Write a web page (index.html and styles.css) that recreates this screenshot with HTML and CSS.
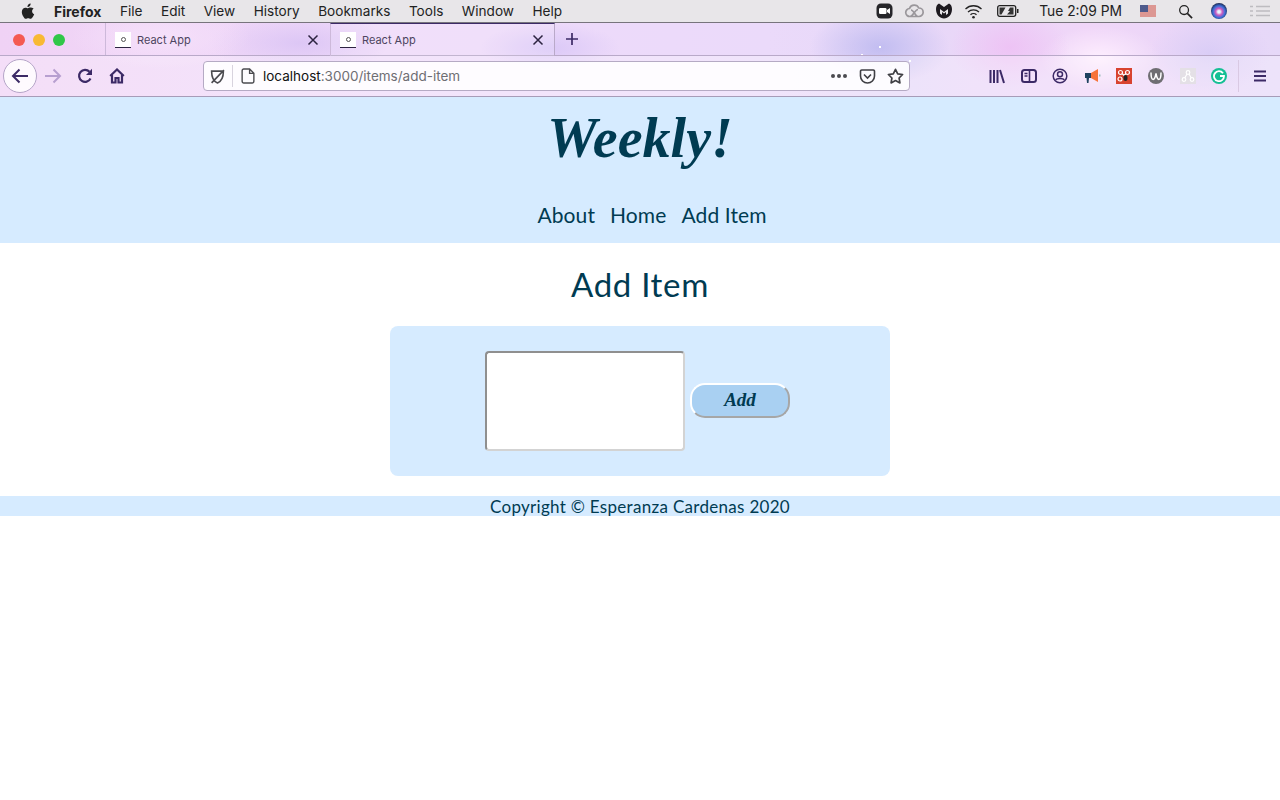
FILE: index.html
```html
<!doctype html>
<html lang="en">
  <head>
    <title>React App</title>
    <meta charset="UTF-8">
    <link rel="stylesheet" href="styles.css">
  </head>
  <body>
    <div class="menuBar">
      <div class="menuLeft">
        <svg class="apple" width="14" height="16" viewBox="0 0 14 16"><path fill="#222" d="M9.6 0.4c.1 1-.3 1.9-.8 2.5-.6.7-1.4 1.200-2.300 1.100-.1-.9.300-1.900.8-2.500C7.900.9 8.900.4 9.600.4zM12.700 5.500c-1 .7-1.600 1.600-1.600 2.800 0 1.400.8 2.400 2.100 3-.4 1.100-.9 2.100-1.600 3-.6.8-1.200 1.500-2.100 1.500-.9 0-1.200-.5-2.300-.5-1.100 0-1.400.5-2.300.5-.9 0-1.500-.7-2.100-1.600C1.600 12.800.8 10.900.8 9.100c0-2.900 1.900-4.400 3.700-4.400 1 0 1.800.6 2.400.6.600 0 1.500-.7 2.600-.7.900 0 2.200.3 3.200.9z"/></svg>
        <span class="menuItem appName">Firefox</span>
        <span class="menuItem">File</span>
        <span class="menuItem">Edit</span>
        <span class="menuItem">View</span>
        <span class="menuItem">History</span>
        <span class="menuItem">Bookmarks</span>
        <span class="menuItem">Tools</span>
        <span class="menuItem">Window</span>
        <span class="menuItem">Help</span>
      </div>
      <div class="menuRight">
        <svg width="17" height="16" viewBox="0 0 17 16"><rect x="0.500" y="0.500" width="16" height="15" rx="4.500" fill="#26262a"/><rect x="3" y="5" width="7.500" height="6" rx="1.200" fill="#fff"/><path d="M11 7l3-2v6l-3-2z" fill="#fff"/></svg>
        <svg width="20" height="14" viewBox="0 0 20 14"><path d="M6 12.500a4 4 0 0 1-.5-8 5 5 0 0 1 9.300-.5A4.200 4.200 0 0 1 15 12.500zM6 12.500c3 0 5-7 8-7M7 6c3 0 4 6.500 7 6.500" fill="none" stroke="#9a979b" stroke-width="1.700"/></svg>
        <svg width="18" height="16" viewBox="0 0 18 16"><path d="M1 6C1 3 2.500 1 4 0.500L9 4l5-3.500C15.500 1 17 3 17 6c0 6-4 9.500-8 9.500S1 12 1 6zM5 6v4.500l2 1.500V9l2 1.500L11 9v3l2-1.500V6l-4 3z" fill="#1d1a1f" fill-rule="evenodd"/></svg>
        <svg width="19" height="15" viewBox="0 0 19 15"><path d="M1.500 5a11.500 11.500 0 0 1 16 0M4 8a8 8 0 0 1 11 0M6.500 10.800a4.300 4.300 0 0 1 6 0" fill="none" stroke="#222" stroke-width="1.300"/><circle cx="9.500" cy="13.300" r="1.300" fill="#222"/></svg>
        <svg class="battery" width="22" height="12" viewBox="0 0 22 12"><rect x="0.700" y="0.700" width="18" height="10.600" rx="2" fill="none" stroke="#222" stroke-width="1.300"/><path d="M2.500 2.500h6l-4 7h-2zM10 9.500l3-3.500h-2l2-3.500h3.500v7z" fill="#333"/><rect x="20" y="4" width="1.500" height="4" fill="#222"/></svg>
        <span class="clock">Tue 2:09 PM</span>
        <span class="flag"><span class="flagCanton"></span></span>
        <svg class="search" width="15" height="15" viewBox="0 0 16 16"><circle cx="6.500" cy="6.500" r="4.700" fill="none" stroke="#222" stroke-width="1.400"/><path d="M10 10l5 5" stroke="#222" stroke-width="1.800"/></svg>
        <span class="siri"></span>
        <svg class="listIcon" width="20" height="12" viewBox="0 0 20 12"><path d="M6 1.500h14M6 6h14M6 10.500h14M0 1.500h3M0 6h3M0 10.500h3" stroke="#bdbcc0" stroke-width="1.500"/></svg>
      </div>
    </div>

    <div class="chrome">
      <div class="tabRow">
        <div class="windowButtons">
          <span class="dot dotRed"></span>
          <span class="dot dotYellow"></span>
          <span class="dot dotGreen"></span>
        </div>
        <div class="tab">
          <span class="favicon"><span class="faviconDot"></span></span>
          <span class="tabTitle">React App</span>
          <svg class="tabClose" width="12" height="12" viewBox="0 0 12 12"><path d="M1.500 1.500l9 9M10.500 1.500l-9 9" stroke="#2c2340" stroke-width="1.500"/></svg>
        </div>
        <div class="tab tabActive">
          <span class="favicon"><span class="faviconDot"></span></span>
          <span class="tabTitle">React App</span>
          <svg class="tabClose" width="12" height="12" viewBox="0 0 12 12"><path d="M1.500 1.500l9 9M10.500 1.500l-9 9" stroke="#2c2340" stroke-width="1.500"/></svg>
        </div>
        <svg class="newTab" width="14" height="14" viewBox="0 0 14 14"><path d="M7 1v12M1 7h12" stroke="#3c2a66" stroke-width="1.700"/></svg>
      </div>

      <div class="navRow">
        <span class="backButton">
          <svg width="18" height="16" viewBox="0 0 18 16"><path d="M17 8H2M8.500 1.500L2 8l6.500 6.500" fill="none" stroke="#3c2a66" stroke-width="2"/></svg>
        </span>
        <svg class="navIcon forward" width="18" height="16" viewBox="0 0 18 16"><path d="M1 8h15M9.500 1.500L16 8l-6.500 6.500" fill="none" stroke="#b79fd0" stroke-width="2"/></svg>
        <svg class="navIcon reload" width="16" height="16" viewBox="0 0 16 16"><path d="M13.500 10.500A6 6 0 1 1 12.500 3.800" fill="none" stroke="#3c2a66" stroke-width="2.200"/><path d="M15 0.800V7H9z" fill="#3c2a66"/></svg>
        <svg class="navIcon home" width="16" height="16" viewBox="0 0 16 16"><path d="M1.200 8L8 1.500 14.800 8M3 7v7.500h3.500V10h3v4.500H13V7" fill="none" stroke="#3c2a66" stroke-width="2.200"/></svg>

        <div class="urlBar">
          <svg class="shield" width="15" height="15" viewBox="0 0 14 14"><path d="M1.500 2h11c0 6-2 9.500-5.500 11C3.500 11.500 1.500 8 1.500 2zM1.500 13L13 1" fill="none" stroke="#4b4b50" stroke-width="1.500"/></svg>
          <span class="urlDivider"></span>
          <svg width="14" height="16" viewBox="0 0 13 15"><path d="M1 2.500a1.500 1.500 0 0 1 1.500-1.500H8l4 4v7.500a1.500 1.500 0 0 1-1.500 1.500h-8A1.500 1.500 0 0 1 1 12.500zM8 1v4h4" fill="none" stroke="#4b4b50" stroke-width="1.300"/></svg>
          <span class="url"><span class="urlHost">localhost</span>:3000/items/add-item</span>
          <span class="urlDots"><i></i><i></i><i></i></span>
          <svg class="urlIcon" width="17" height="15" viewBox="0 0 16 15"><path d="M1 2.200A1.200 1.200 0 0 1 2.200 1h11.600A1.200 1.200 0 0 1 15 2.200V7a7 7 0 0 1-14 0zM4.500 5.500L8 9l3.500-3.500" fill="none" stroke="#3f3f44" stroke-width="1.600"/></svg>
          <svg class="urlIcon" width="17" height="16" viewBox="0 0 17 16"><path d="M8.500 1.300l2.200 4.500 4.900.7-3.500 3.500.8 4.900-4.400-2.300-4.400 2.300.8-4.900L1.400 6.500l4.900-.7z" fill="none" stroke="#3f3f44" stroke-width="1.700" stroke-linejoin="round"/></svg>
        </div>

        <div class="toolIcons">
          <svg width="16" height="15" viewBox="0 0 16 15"><path d="M1.500 1v13M5 1v13M8.500 1v13M11 1l4 13" fill="none" stroke="#3c2a66" stroke-width="2"/></svg>
          <svg width="16" height="14" viewBox="0 0 16 14"><rect x="1" y="1" width="14" height="12" rx="2.500" fill="none" stroke="#3c2a66" stroke-width="2"/><path d="M8.500 1v12M3.500 4.500h3M3.500 7h3" stroke="#3c2a66" stroke-width="1.600"/></svg>
          <svg width="16" height="16" viewBox="0 0 16 16"><circle cx="8" cy="8" r="6.800" fill="none" stroke="#3c2a66" stroke-width="1.500"/><circle cx="8" cy="6.300" r="2.500" fill="none" stroke="#3c2a66" stroke-width="1.500"/><path d="M3.800 12c1-2 7.400-2 8.400 0" fill="none" stroke="#3c2a66" stroke-width="1.500"/></svg>
          <svg width="17" height="16" viewBox="0 0 17 16"><path d="M1 5h6v5H5l-.5 5H3l-.5-5H1z" fill="#1f4260"/><path d="M7 5l7-4v13L7 10z" fill="#f7743b"/><rect x="15" y="6.500" width="1.500" height="2" fill="#9bb"/></svg>
          <span class="appTile tileRed"><svg width="14" height="14" viewBox="0 0 14 14"><g fill="none" stroke="#fff" stroke-width="1.200"><circle cx="3.500" cy="3.500" r="2"/><circle cx="10.500" cy="3.500" r="2"/><circle cx="3" cy="10" r="2"/><path d="M5 4.500l2 2 2-2"/></g><ellipse cx="8.500" cy="9" rx="2" ry="3" fill="#222"/></svg></span>
          <span class="appRound roundGrey"><svg width="12" height="10" viewBox="0 0 12 10"><path d="M1 1.500c0 9 3.500 9 5 1 1.500 8 5 8 5-1" fill="none" stroke="#fff" stroke-width="1.500"/></svg></span>
          <span class="appTile tilePale"><svg width="14" height="14" viewBox="0 0 14 14"><g fill="none" stroke="#fff" stroke-width="1.200"><circle cx="7" cy="3.500" r="1.800"/><circle cx="3" cy="10.500" r="1.800"/><circle cx="11" cy="10.500" r="1.800"/><path d="M6 5l-2.300 4M8 5l2.300 4"/></g></svg></span>
          <span class="appRound roundGreen"><svg width="12" height="12" viewBox="0 0 12 12"><path d="M10 3.200A5 5 0 1 0 11 6H7" fill="none" stroke="#fff" stroke-width="1.800"/></svg></span>
        </div>
        <span class="toolDivider"></span>
        <svg class="burger" width="12" height="12" viewBox="0 0 12 12"><path d="M0 1.500h12M0 6h12M0 10.500h12" stroke="#3c2a66" stroke-width="2"/></svg>
      </div>
    </div>

    <header class="siteHeader">
      <h1 class="logo">Weekly!</h1>
      <nav class="siteNav">
        <a href="#">About</a>
        <a href="#">Home</a>
        <a href="#">Add Item</a>
      </nav>
    </header>

    <main class="content">
      <h2 class="pageTitle">Add Item</h2>
      <form class="addForm">
        <textarea class="itemInput"></textarea>
        <button class="addButton" type="button">Add</button>
      </form>
    </main>

    <footer class="siteFooter">Copyright © Esperanza Cardenas 2020</footer>
  </body>
</html>
```

FILE: styles.css
```css
html, body {
  margin: 0;
  padding: 0;
  background: #fff;
}

body {
  font-family: "Lato", "Open Sans", sans-serif;
  color: #003b52;
  overflow: hidden;
}

/* mac menu bar */
.menuBar {
  height: 22px;
  display: flex;
  justify-content: space-between;
  align-items: center;
  background: #e8e6e9;
  border-bottom: 1px solid #77747c;
  font-family: "Inter", "Liberation Sans", sans-serif;
  font-size: 13.6px;
  color: #222;
}

.menuLeft {
  display: flex;
  align-items: center;
  padding-left: 21px;
}

.apple {
  margin-right: 19px;
}

.menuItem {
  margin-right: 18.500px;
}

.appName {
  font-weight: 700;
  font-size: 14px;
}

.menuRight {
  display: flex;
  align-items: center;
  gap: 11px;
  padding-right: 10px;
}

.battery {
  margin-left: 3px;
}

.clock {
  margin: 0 7px 0 9px;
  font-size: 13.800px;
}

.flag {
  display: block;
  width: 16px;
  height: 12px;
  margin-right: 11px;
  background: #dc9793;
  position: relative;
}

.flagCanton {
  position: absolute;
  left: 0;
  top: 0;
  width: 8px;
  height: 7px;
  background: #4e5a8c;
}

.search {
  margin-right: 7px;
}

.siri {
  display: block;
  width: 16px;
  height: 16px;
  border-radius: 50%;
  background: radial-gradient(circle at 50% 55%, #e8f4ff 0 10%, #d05cc0 28%, #3b6fd8 50%, #15152e 80%);
}

.listIcon {
  margin-left: 12px;
}

/* browser chrome */
.chrome {
  height: 73px;
  border-bottom: 1px solid #a79cb8;
  background:
    radial-gradient(circle 1px at 862px 32px, #fff 0 100%, transparent 100%),
    radial-gradient(circle 1px at 880px 24px, #fff 0 100%, transparent 100%),
    radial-gradient(circle 1px at 893px 44px, #fff 0 100%, transparent 100%),
    radial-gradient(circle 1px at 910px 38px, #fff 0 100%, transparent 100%),
    radial-gradient(ellipse 70px 38px at 880px 24px, rgba(190, 186, 240, 0.9) 0%, rgba(190, 186, 240, 0) 100%),
    radial-gradient(ellipse 60px 40px at 1010px 24px, rgba(238, 190, 244, 0.8) 0%, rgba(238, 190, 244, 0) 100%),
    radial-gradient(ellipse 60px 32px at 1100px 35px, rgba(255, 240, 255, 0.9) 0%, rgba(255, 240, 255, 0) 100%),
    radial-gradient(ellipse 60px 40px at 1210px 30px, rgba(216, 204, 246, 0.9) 0%, rgba(216, 204, 246, 0) 100%),
    radial-gradient(ellipse 90px 32px at 160px 14px, rgba(246, 226, 250, 0.9) 0%, rgba(246, 226, 250, 0) 100%),
    radial-gradient(ellipse 90px 30px at 300px 20px, rgba(216, 194, 244, 0.8) 0%, rgba(216, 194, 244, 0) 100%),
    radial-gradient(ellipse 70px 25px at 550px 25px, rgba(214, 196, 246, 0.8) 0%, rgba(214, 196, 246, 0) 100%),
    linear-gradient(90deg, #f0d2f5 0%, #efdafa 30%, #ebdafa 60%, #e6d8f8 70%, #f0d6f8 85%, #e6d8f8 100%);
}

.tabRow {
  height: 33px;
  display: flex;
  align-items: stretch;
  border-bottom: 1px solid #b9a9c9;
  box-sizing: border-box;
}

.windowButtons {
  width: 105px;
  box-sizing: border-box;
  padding: 2px 0 0 13px;
  display: flex;
  align-items: center;
  gap: 8px;
}

.dot {
  width: 12px;
  height: 12px;
  border-radius: 50%;
}

.dotRed { background: #f45a52; }
.dotYellow { background: #f8b934; }
.dotGreen { background: #30c748; }

.tab {
  width: 225px;
  box-sizing: border-box;
  display: flex;
  align-items: center;
  padding: 2px 11px 0 9px;
  border-left: 1px solid #cdb9da;
  font-family: "Inter", "Liberation Sans", sans-serif;
  font-size: 11px;
  color: #4d4560;
}

.tabActive {
  padding-top: 0;
  padding-right: 10px;
  border-top: 1px solid #3c2a66;
  border-right: 1px solid #b9a9c9;
  background: rgba(255, 255, 255, 0.14);
  margin-bottom: -1px;
}

.favicon {
  width: 16px;
  height: 15px;
  margin-right: 6px;
  background: #fff;
  border-bottom: 1px solid #2c2340;
  display: flex;
  align-items: center;
  justify-content: center;
}

.faviconDot {
  width: 5px;
  height: 5px;
  border-radius: 50%;
  border: 1px solid #555;
  box-sizing: border-box;
}

.tabTitle {
  flex: 1;
}

.newTab {
  align-self: center;
  margin-left: 10px;
}

.navRow {
  height: 40px;
  display: flex;
  align-items: center;
  padding-left: 3px;
  background: rgba(255, 255, 255, 0.28);
}

.backButton {
  width: 32px;
  height: 32px;
  border: 1px solid #b5a5c8;
  border-radius: 50%;
  background: rgba(255, 255, 255, 0.85);
  display: flex;
  align-items: center;
  justify-content: center;
}

.forward { margin-left: 7px; }
.reload { margin-left: 15px; }
.home { margin-left: 16px; }

.urlBar {
  width: 707px;
  height: 30px;
  margin-left: 78px;
  box-sizing: border-box;
  display: flex;
  align-items: center;
  background: rgba(255, 255, 255, 0.88);
  border: 1px solid #b5aac4;
  border-radius: 4px;
  padding: 0 5px 0 6px;
  font-family: "Inter", "Liberation Sans", sans-serif;
  font-size: 13.500px;
  color: #6e6e73;
}

.urlDivider {
  width: 1px;
  height: 22px;
  margin: 0 8px 0 7px;
  background: #d8d3de;
}

.url {
  flex: 1;
  margin-left: 8px;
}

.urlHost {
  color: #111;
}

.urlDots {
  display: flex;
  gap: 2px;
  margin-right: 12px;
}

.urlDots i {
  width: 4px;
  height: 4px;
  border-radius: 50%;
  background: #4b4b50;
}

.urlIcon {
  margin-right: 6px;
}

.urlIcon:last-child {
  margin-left: 5px;
  margin-right: 0;
}

.toolIcons {
  display: flex;
  align-items: center;
  gap: 15.600px;
  margin-left: 79px;
}

.appTile {
  width: 16px;
  height: 16px;
  display: flex;
  align-items: center;
  justify-content: center;
}

.tileRed { background: #d8432f; }
.tilePale { background: #e4e0e6; }

.appRound {
  width: 16px;
  height: 16px;
  border-radius: 50%;
  display: flex;
  align-items: center;
  justify-content: center;
}

.roundGrey { background: #6f6e72; }
.roundGreen { background: #14bf94; }

.toolDivider {
  width: 1px;
  height: 32px;
  margin-left: 11px;
  background: #d9c9e3;
}

.burger {
  margin-left: 15px;
}

/* the page */
.siteHeader {
  height: 146px;
  box-sizing: border-box;
  background: #d6ebff;
  text-align: center;
  padding-top: 10px;
}

.logo {
  margin: 0;
  height: 71px;
  font-family: "Liberation Serif", serif;
  font-style: italic;
  font-weight: 700;
  font-size: 56px;
  line-height: 62px;
}

.siteNav {
  margin-top: 24px;
  padding-left: 24px;
  display: flex;
  justify-content: center;
  gap: 15px;
  font-size: 21px;
  line-height: 26px;
  letter-spacing: 0.1px;
}

.siteNav a {
  color: #003b52;
  text-decoration: none;
}

.content {
  text-align: center;
}

.pageTitle {
  margin: 0;
  padding-top: 23px;
  height: 83px;
  box-sizing: border-box;
  font-size: 33px;
  font-weight: 400;
  line-height: 37px;
  letter-spacing: 0.7px;
}

.addForm {
  width: 500px;
  height: 150px;
  box-sizing: border-box;
  margin: 0 auto 20px;
  background: #d6ebff;
  border-radius: 8px;
  display: flex;
  align-items: center;
  justify-content: center;
  gap: 5px;
  padding-right: 5px;
}

.itemInput {
  width: 200px;
  height: 100px;
  box-sizing: border-box;
  padding: 0;
  background: #fff;
  border: 2px solid;
  border-color: #8f8f8f #d3d3d3 #d3d3d3 #8f8f8f;
  border-radius: 4px;
  resize: none;
  outline: none;
}

.addButton {
  width: 100px;
  height: 35px;
  box-sizing: border-box;
  padding: 0;
  margin-bottom: 2px;
  background: #a9d0f2;
  border: 2px solid;
  border-color: #fff #a6a6a6 #a6a6a6 #fff;
  border-radius: 15px;
  font-family: "Liberation Serif", serif;
  font-style: italic;
  font-weight: 700;
  font-size: 19px;
  color: #003b52;
}

.siteFooter {
  height: 20px;
  background: #d6ebff;
  text-align: center;
  font-size: 17px;
  line-height: 22px;
  letter-spacing: 0.3px;
}
```
